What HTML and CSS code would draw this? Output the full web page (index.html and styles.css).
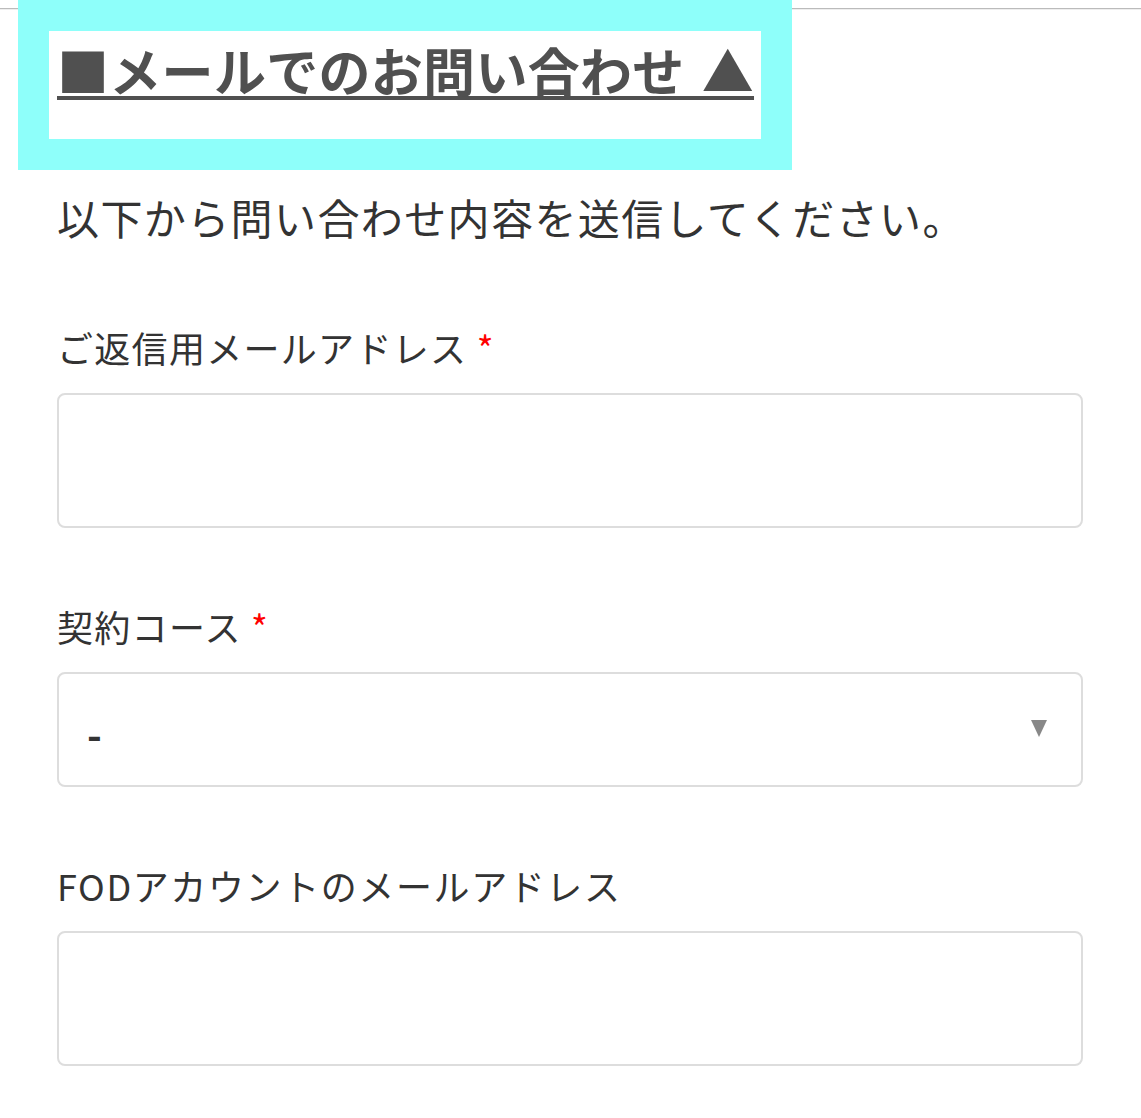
FILE: index.html
```html
<!DOCTYPE html>
<html lang="ja">
<head>
<meta charset="utf-8">
<title>メールでのお問い合わせ</title>
<link rel="stylesheet" href="styles.css">
</head>
<body>
<div class="topline"></div>
<div class="highlight">
  <div class="title-box">
    <h2 class="title"><a class="title-link" href="#">■メールでのお問い合わせ ▲</a></h2>
  </div>
</div>
<main class="page">
  <p class="lead">以下から問い合わせ内容を送信してください。</p>
  <form class="form">
    <div class="field">
      <label class="label" for="reply">ご返信用メールアドレス <span class="req">*</span></label>
      <input class="input" id="reply" type="email">
    </div>
    <div class="field">
      <label class="label" for="course">契約コース <span class="req">*</span></label>
      <div class="select-wrap">
        <select class="select" id="course">
          <option>-</option>
        </select>
        <span class="select-arrow"></span>
      </div>
    </div>
    <div class="field">
      <label class="label label-wide" for="fod">FODアカウントのメールアドレス</label>
      <input class="input" id="fod" type="email">
    </div>
  </form>
</main>
</body>
</html>
```
FILE: styles.css
```css
html, body {
  margin: 0;
  padding: 0;
  background: #fff;
}
body {
  font-family: "Noto Sans CJK JP", "Noto Sans", sans-serif;
  color: #333;
}
.topline {
  height: 8px;
  border-bottom: 1px solid #bbb;
  box-shadow: 0 1px 0 #eee;
}
.highlight {
  margin-top: -9px;
  margin-left: 18px;
  width: 774px;
  padding: 31px;
  box-sizing: border-box;
  background: #8efffa;
}
.title-box {
  background: #fff;
  height: 108px;
  padding: 13px 8px 0;
  box-sizing: border-box;
}
.title {
  margin: 0;
  font-size: 52px;
  line-height: 52px;
  font-weight: 700;
  white-space: nowrap;
  letter-spacing: 0.3px;
  word-spacing: 5px;
}
.title-link {
  color: #505050;
  text-decoration: underline;
  text-decoration-thickness: 4px;
  text-underline-offset: 4px;
}
.page {
  padding: 0 58px 40px 57px;
}
.lead {
  margin: 18px 0 0;
  font-size: 42px;
  line-height: 1.4;
  letter-spacing: 1.4px;
  color: #333;
}
.form {
  margin-top: 75px;
}
.field {
  margin-bottom: 73px;
}
.label {
  display: block;
  font-size: 36px;
  line-height: 50px;
  letter-spacing: 1.3px;
  color: #333;
  margin-bottom: 21px;
}
.label-wide {
  letter-spacing: 1.6px;
}
.req {
  color: #f00;
}
.input {
  display: block;
  width: 100%;
  height: 135px;
  box-sizing: border-box;
  border: 2px solid #ddd;
  border-radius: 8px;
  background: #fff;
  margin: 0;
  padding: 0 28px;
  font-family: inherit;
  font-size: 36px;
  outline: none;
}
.select-wrap {
  position: relative;
}
.select {
  display: block;
  width: 100%;
  height: 115px;
  box-sizing: border-box;
  border: 2px solid #ddd;
  border-radius: 8px;
  background: #fff;
  margin: 0;
  padding: 8px 28px 0;
  font-family: inherit;
  font-size: 40px;
  font-weight: 700;
  color: #333;
  -webkit-appearance: none;
  appearance: none;
  outline: none;
}
.select-arrow {
  position: absolute;
  right: 36px;
  top: 48px;
  width: 0;
  height: 0;
  border-left: 8.5px solid transparent;
  border-right: 8.5px solid transparent;
  border-top: 17px solid #888;
  pointer-events: none;
}
```
